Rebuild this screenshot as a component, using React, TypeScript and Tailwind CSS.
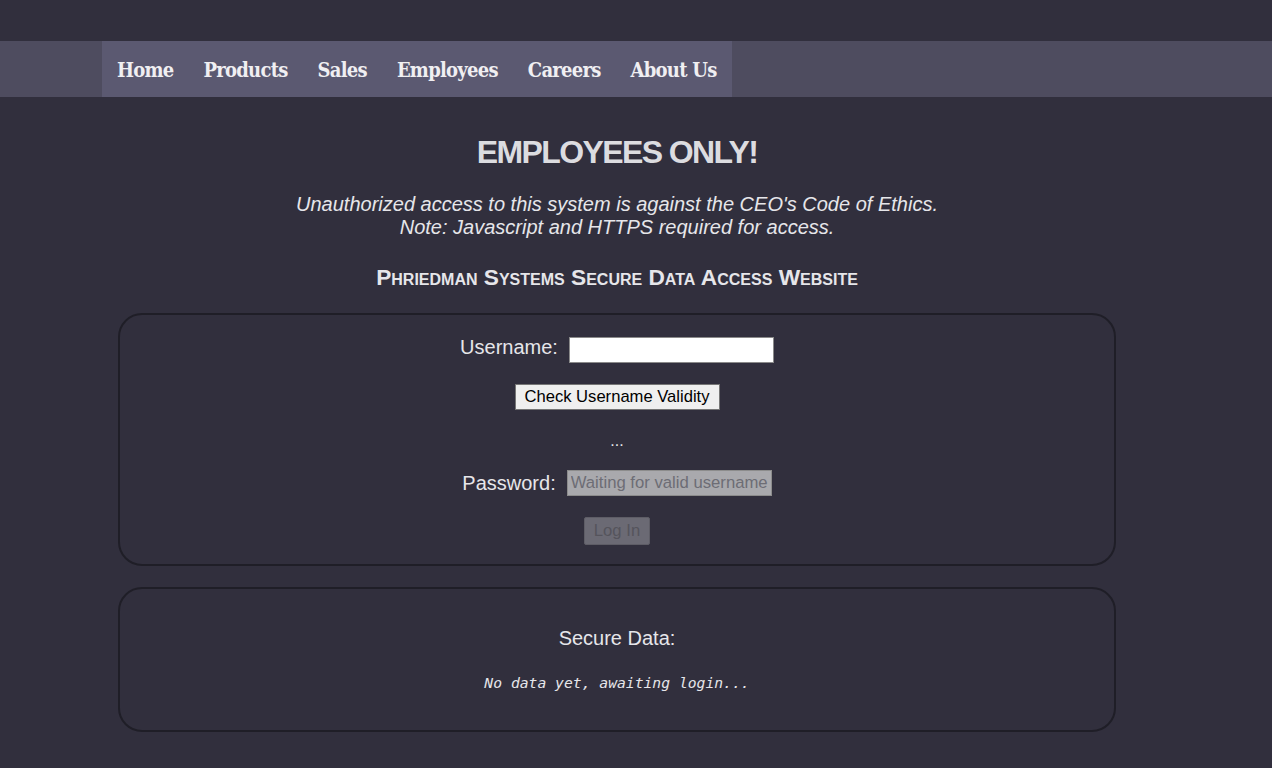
import React from "react";

const navItems = ["Home", "Products", "Sales", "Employees", "Careers", "About Us"];

const App: React.FC = () => {
  return (
    <div
      className="min-h-[768px] bg-[#312f3d] text-[#e6e6ea]"
      style={{ fontFamily: '"Liberation Sans", Arial, sans-serif' }}
    >
      <div className="h-[41px]" />
      {/* top navigation */}
      <nav className="h-[56px] bg-[#4e4c5f]">
        <div className="ml-[102px] flex h-full w-fit bg-[#5b5971]">
          {navItems.map((item) => (
            <a
              key={item}
              className="flex items-center px-[15px] pt-[2px] text-[20px] font-bold tracking-[-0.75px] text-[#f0eff2] [font-stretch:condensed]"
              style={{ fontFamily: '"DejaVu Serif Condensed", "DejaVu Serif", "Liberation Serif", serif' }}
            >
              {item}
            </a>
          ))}
        </div>
      </nav>

      <main className="ml-[102px] w-[1030px] pb-[36px]">
        <h1 className="pt-[37px] text-center text-[32px] font-bold leading-[37px] tracking-[-1.6px] text-[#dcdce0]">
          EMPLOYEES ONLY!
        </h1>
        <p className="mt-[22px] text-center text-[20px] italic leading-[23px]">
          Unauthorized access to this system is against the CEO's Code of Ethics.
          <br />
          Note: Javascript and HTTPS required for access.
        </p>
        <h2 className="mt-[25px] text-center text-[22.7px] font-bold leading-[26px] [font-variant:small-caps]">
          Phriedman Systems Secure Data Access Website
        </h2>

        {/* login card */}
        <section className="mx-[16px] mt-[23px] flex h-[253px] flex-col items-center rounded-[24px] border-2 border-[#1f1e27] pt-[20px]">
          <div className="flex items-center gap-[11px]">
            <label className="-translate-y-[3px] text-[20px]">Username:</label>
            <input
              type="text"
              className="h-[26px] w-[205px] border border-[#8a8a8a] bg-white px-1 text-[16px] text-black outline-none"
            />
          </div>
          <button className="mt-[19px] h-[26px] w-[205px] border border-[#767676] bg-[#efefef] text-[16.6px] text-black">
            Check Username Validity
          </button>
          <div className="mt-[21px] text-[16px] leading-[20px]">...</div>
          <div className="mt-[17px] flex items-center gap-[11px]">
            <label className="text-[20px]">Password:</label>
            <input
              type="password"
              disabled
              placeholder="Waiting for valid username"
              className="h-[26px] w-[205px] border border-[#8c8c8c] bg-[#a9a9ad] px-[3px] text-[16.7px] placeholder:text-[#6d6d75]"
            />
          </div>
          <button
            disabled
            className="mt-[19px] h-[28px] w-[66px] rounded-[2px] border border-[#5e5d66] bg-[#6b6a74] text-[16.7px] text-[#55545c]"
          >
            Log In
          </button>
        </section>

        {/* data card */}
        <section className="mx-[16px] mt-[21px] flex h-[145px] flex-col items-center rounded-[24px] border-2 border-[#1f1e27] pt-[38px]">
          <div className="text-[20px] leading-[23px]">Secure Data:</div>
          <pre
            className="mt-[22px] text-[14.7px] italic"
            style={{ fontFamily: '"DejaVu Sans Mono", monospace' }}
          >
            No data yet, awaiting login...
          </pre>
        </section>
      </main>
    </div>
  );
};

export default App;
